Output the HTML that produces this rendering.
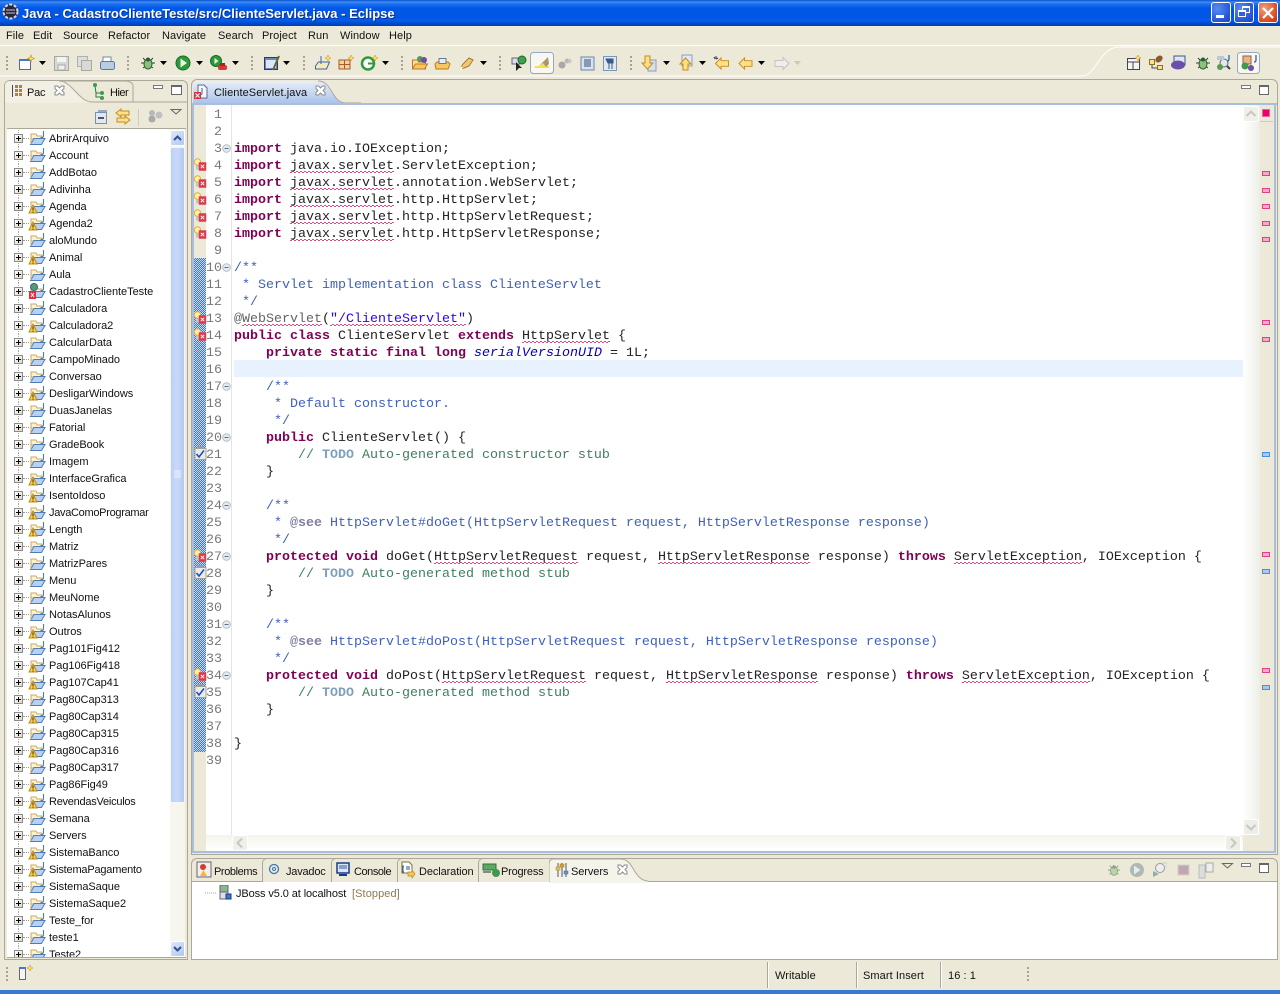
<!DOCTYPE html>
<html><head><meta charset="utf-8"><title>Java - Eclipse</title>
<style>
*{box-sizing:border-box}
html,body{margin:0;padding:0}
body{width:1280px;height:994px;overflow:hidden;position:relative;background:#ece9d8;font:11px "Liberation Sans",sans-serif;color:#111}
.a{position:absolute}
.t{position:absolute;white-space:nowrap;line-height:14px;letter-spacing:.08px;margin-top:1px}
.n{letter-spacing:-.2px}
#title{left:0;top:0;width:1280px;height:26px;background:linear-gradient(#0a4fd0 0,#3d8ef6 2px,#1d6fee 4px,#0058e6 8px,#0055e5 17px,#005fee 20px,#0048c8 24px,#0a3aa8 26px)}
#title span{position:absolute;left:22px;top:6px;color:#fff;font:bold 13px/16px "Liberation Sans",sans-serif;letter-spacing:0;white-space:nowrap;text-shadow:1px 1px #0a2f90}
.wb{position:absolute;top:2px;width:20px;height:21px;border:1px solid #fff;border-radius:3px;background:radial-gradient(circle at 30% 30%,#5a8cf0,#2456d8 70%,#1b46c0)}
.wb.c{background:radial-gradient(circle at 30% 30%,#f0a080,#d84a20 70%,#b83a18)}
pre{margin:0;font:13.33px/17px "Liberation Mono",monospace;position:absolute;color:#222}
#code b{color:#7f0055}
.j{color:#3f5fbf}.c{color:#3f7f5f}.d{color:#7f9fbf;font-weight:bold}.s{color:#2a00ff}.f{color:#0000c0;font-style:italic}.g{color:#7f7f9f;font-weight:bold}
u{text-decoration:none;background:repeating-conic-gradient(#dc4a86 0 25%,transparent 0 50%) 0 calc(100% - 1px)/4px 2px repeat-x}
#tree{left:7px;top:129px;width:163px;height:828px;background:#fff;overflow:hidden;padding-top:1px}
.r{position:relative;height:17px;line-height:19px;padding-left:42px;white-space:nowrap;letter-spacing:-.05px;font-size:11px}
.r svg{position:absolute;left:21px;top:0;width:18px;height:17px}
.r i{position:absolute;left:7px;top:4px;width:9px;height:9px;border:1px solid #8a8a8a;background:linear-gradient(135deg,#fff,#dcd8c8)}
.r i:before{content:"";position:absolute;left:1px;top:3px;width:5px;height:1px;background:#000}
.r i:after{content:"";position:absolute;left:3px;top:1px;width:1px;height:5px;background:#000}
.r s{position:absolute;left:16px;top:8px;width:6px;border-top:1px dotted #999}
.r em{position:absolute;left:11px;top:0;height:17px;border-left:1px dotted #aaa}
.tab{position:absolute;top:858px;height:24px;border-left:1px solid #aca899;border-top:1px solid #aca899;border-radius:5px 0 0 0;background:#ece9d8}
.pk{position:absolute;left:1262px;width:8px;height:5px;background:#f8a8c8;border:1px solid #e0408a}
.bl{position:absolute;left:1262px;width:8px;height:5px;background:#a8c8f0;border:1px solid #4a90d8}
.sep{position:absolute;top:962px;height:26px;width:2px;background:#aca899;border-right:1px solid #fff}
</style></head>
<body>
<svg width="0" height="0" style="position:absolute">
<defs>
<symbol id="f" viewBox="0 0 18 17">
<path d="M3 4h5l1 2h5v3H3z" fill="#fdf3d2" stroke="#c8a860"/>
<path d="M2.500 14.500L6 8.500h11l-3.500 6z" fill="#b8d0f4" stroke="#4c7cb8"/>
<path d="M3 5v9" stroke="#c8a860"/>
<path d="M15.500 1v5q0 2-3 1.500" fill="none" stroke="#4c7cb8" stroke-width="1.100"/>
</symbol>
<symbol id="w" viewBox="0 0 18 17">
<path d="M5 7l4 8H1z" fill="#fbcf3e" stroke="#c08a20"/>
<path d="M5 9.500v3M5 13.500v1" stroke="#402800"/>
</symbol>
<symbol id="e" viewBox="0 0 13 15">
<circle cx="3.500" cy="4" r="3.200" fill="#fff0a8" stroke="#e0b040"/>
<path d="M2 7.500h3v4H2z" fill="#c4c4c0"/>
<rect x="5" y="4.500" width="7" height="8" fill="#e03848" stroke="#c84858" stroke-width=".5"/>
<path d="M6.800 6.800l3.400 3.400M10.200 6.800l-3.400 3.400" stroke="#fff"/>
</symbol>
<symbol id="k" viewBox="0 0 13 15">
<path d="M3.500 0h6v3h-6z" fill="#99a"/>
<rect x="1" y="2.500" width="11" height="11" fill="#eeece2" stroke="#a0a098"/>
<path d="M2.500 8l2.500 3 5-6.500" fill="none" stroke="#1850c8" stroke-width="1.600"/>
</symbol>
<symbol id="m" viewBox="0 0 9 9">
<circle cx="4.500" cy="4.500" r="3.800" fill="#e6eaf0" stroke="#b0bcc8"/>
<path d="M2.500 4.500h4" stroke="#5a7090"/>
</symbol>
<symbol id="da" viewBox="0 0 7 4"><path d="M0 0h7L3.500 4z" fill="#000"/></symbol>
<symbol id="ha" viewBox="0 0 2 16"><path d="M0 1h2v2H0zM0 5h2v2H0zM0 9h2v2H0zM0 13h2v2H0z" fill="#a8a490"/></symbol>
<symbol id="bug" viewBox="0 0 16 16"><path d="M3 3l3 3M13 3l-3 3M1 8h3M15 8h-3M3 13l3-2M13 13l-3-2" stroke="#1f4a30" fill="none"/><ellipse cx="8" cy="9" rx="4" ry="5" fill="#8fbf7a" stroke="#2a5a3a"/><circle cx="8" cy="4.500" r="2" fill="#2a5a3a"/></symbol>
<symbol id="ar" viewBox="0 0 16 14"><path d="M1 7l6-6v3h8v6H7v3z" fill="#fce08a" stroke="#c88a18"/></symbol>
<symbol id="X" viewBox="0 0 11 11"><path d="M1 1h2.500l2 2 2-2H10v2.500l-2 2 2 2V10H7.500l-2-2-2 2H1V7.500l2-2-2-2z" fill="#fff" stroke="#8c8c8c"/></symbol>
</defs>
</svg>

<!-- title bar -->
<div id="title" class="a"><span>Java - CadastroClienteTeste/src/ClienteServlet.java - Eclipse</span></div>
<svg class="a" style="left:2px;top:3px" width="17" height="17"><circle cx="8.500" cy="8.500" r="7" fill="#26263c" stroke="#e0d8d0" stroke-width="2" stroke-dasharray="3 1.500"/><path d="M4 7h9M4 10h9" stroke="#c8c0d8"/></svg>
<div class="wb" style="left:1211px"><div class="a" style="left:4px;top:12px;width:8px;height:3px;background:#fff"></div></div>
<div class="wb" style="left:1234px"><div class="a" style="left:7px;top:3px;width:8px;height:7px;border:1px solid #fff;border-top-width:2px"></div><div class="a" style="left:3px;top:7px;width:8px;height:7px;border:1px solid #fff;border-top-width:2px;background:#2f60dc"></div></div>
<div class="wb c" style="left:1258px"><svg class="a" style="left:3px;top:4px" width="12" height="12"><path d="M1 1l10 10M11 1L1 11" stroke="#fff" stroke-width="2.200"/></svg></div>

<!-- menu -->
<div class="t" style="left:6px;top:28px">File</div>
<div class="t" style="left:33px;top:28px">Edit</div>
<div class="t" style="left:63px;top:28px">Source</div>
<div class="t" style="left:108px;top:28px">Refactor</div>
<div class="t" style="left:162px;top:28px">Navigate</div>
<div class="t" style="left:218px;top:28px">Search</div>
<div class="t" style="left:262px;top:28px">Project</div>
<div class="t" style="left:308px;top:28px">Run</div>
<div class="t" style="left:340px;top:28px">Window</div>
<div class="t" style="left:389px;top:28px">Help</div>
<div class="a" style="left:0;top:45px;width:1280px;height:1px;background:#fff"></div>

<!-- toolbar -->
<svg class="a" style="left:0;top:46px" width="1280" height="34">
<g id="tb" transform="translate(0,-46)">
<use href="#ha" x="6" y="55" width="2" height="16"/><use href="#ha" x="127" y="55" width="2" height="16"/><use href="#ha" x="251" y="55" width="2" height="16"/><use href="#ha" x="303" y="55" width="2" height="16"/><use href="#ha" x="401" y="55" width="2" height="16"/><use href="#ha" x="499" y="55" width="2" height="16"/><use href="#ha" x="630" y="55" width="2" height="16"/>
<!-- new -->
<rect x="19.500" y="59.500" width="11" height="10" fill="#fff" stroke="#5a6a80"/><rect x="19" y="59" width="12" height="2" fill="#4a78c0"/><path d="M31 55l1 2.500 2.500 1-2.500 1-1 2.500-1-2.500-2.500-1 2.500-1z" fill="#fce068" stroke="#c09020" stroke-width=".6"/>
<use href="#da" x="39" y="61" width="7" height="4"/>
<!-- save -->
<rect x="54.500" y="56.500" width="14" height="14" fill="#d8d8d4" stroke="#a8a8a4"/><rect x="57" y="57" width="9" height="5" fill="#f4f4f0"/><rect x="58" y="65" width="7" height="5" fill="#f0f0ea" stroke="#aaa"/>
<rect x="77.500" y="56.500" width="10" height="10" fill="#ddd" stroke="#b0b0ac"/><rect x="81.500" y="60.500" width="10" height="10" fill="#d8d8d4" stroke="#a8a8a4"/>
<path d="M103 57h8v5h-8z" fill="#fff" stroke="#7088a8"/><rect x="100.500" y="61.500" width="14" height="8" rx="2" fill="#b8cce4" stroke="#5878a8"/>
<!-- debug run -->
<use href="#bug" x="140" y="55" width="16" height="16"/><use href="#da" x="160" y="61" width="7" height="4"/>
<circle cx="183" cy="63" r="7" fill="#2f9a3a" stroke="#1a6a28"/><path d="M180.500 58.500v9l6.500-4.500z" fill="#e8f8e0"/><use href="#da" x="196" y="61" width="7" height="4"/>
<circle cx="216" cy="61" r="5.500" fill="#2f9a3a" stroke="#1a6a28"/><path d="M214.500 58v6l4-3z" fill="#e8f8e0"/><rect x="218" y="65" width="9" height="5" rx="2" fill="#d83838"/><rect x="220" y="63" width="5" height="3" fill="#b02020"/><use href="#da" x="232" y="61" width="7" height="4"/>
<!-- task -->
<rect x="264.500" y="57.500" width="13" height="12" fill="#6a88b8" stroke="#283a68"/><rect x="266" y="60" width="10" height="8" fill="#dde6f2"/><path d="M279 56l-6 14" stroke="#606a30" stroke-width="2"/><use href="#da" x="283" y="61" width="7" height="4"/>
<!-- new pkg etc -->
<path d="M315.500 66l3-4h11l-3 7h-11z" fill="#f8eab8" stroke="#3a66a8"/><path d="M321 56v8" stroke="#3a66a8"/><path d="M328 55l1 2 2 1-2 1-1 2-1-2-2-1 2-1z" fill="#fce068" stroke="#c09020" stroke-width=".5"/>
<path d="M339 60h11v9h-11z" fill="#f0d4a0" stroke="#a85a28"/><path d="M344.500 60v9M339 64.500h11" stroke="#a85a28"/><path d="M351 55l1 2 2 1-2 1-1 2-1-2-2-1 2-1z" fill="#fce068" stroke="#c09020" stroke-width=".5"/>
<circle cx="368" cy="63.500" r="6" fill="#fff" stroke="#2f9a3a" stroke-width="2.500"/><path d="M368 63.500h5" stroke="#2f9a3a" stroke-width="2"/><path d="M375 55l1 2 2 1-2 1-1 2-1-2-2-1 2-1z" fill="#fce068" stroke="#c09020" stroke-width=".5"/><use href="#da" x="382" y="61" width="7" height="4"/>
<!-- open -->
<path d="M412.500 69v-9h5l1 2h7v7z" fill="#fbe0a0" stroke="#c07820"/><path d="M412.500 69l3-5h12l-3 5z" fill="#f8c860" stroke="#c07820"/><circle cx="420" cy="59" r="3" fill="#5a9a50"/><circle cx="424" cy="60" r="3" fill="#6a50a0"/>
<path d="M436 69l-1-5 2-2h11l2 2-2 5z" fill="#f8c860" stroke="#c07820"/><rect x="439" y="58.500" width="7" height="5" fill="#e8ecf0" stroke="#6a7a90"/>
<path d="M460 69l3-5 6-6 4 2-4 6-5 2z" fill="#f0c878" stroke="#a87828"/><path d="M460 70l2-3" stroke="#fff" stroke-width="2"/><use href="#da" x="480" y="61" width="7" height="4"/>
<!-- toggles -->
<path d="M512 58h8v6h-8z" fill="#dde" stroke="#667"/><path d="M516 62v9l3-3h3z" fill="#222"/><circle cx="522" cy="60" r="4" fill="#3fa050" stroke="#1a6a28"/>
<rect x="530.500" y="52.500" width="23" height="21" rx="3" fill="#f8f7f0" stroke="#96a8c8"/><path d="M535 67h14" stroke="#f4e048" stroke-width="2"/><path d="M539 66l9-9 1 7-3 3h-7z" fill="#a89870"/><path d="M539 66l4-3 3 4h-7z" fill="#f0e060"/>
<circle cx="562" cy="65" r="3.500" fill="#a8a8a8"/><circle cx="567" cy="61" r="2.500" fill="#b8b8b8"/><path d="M570 58l1 2 1 1-1 1-1 2-1-2-1-1 1-1z" fill="#c8c8c0"/>
<rect x="581" y="57" width="13" height="13" fill="#d8e2f0" stroke="#6a88b0"/><path d="M584 60h7M584 62h7M584 64h7M584 66h7" stroke="#34507c"/>
<rect x="603.500" y="56.500" width="13" height="14" fill="#e0e8f2" stroke="#7a98b8"/><path d="M609 59v10M612 59v10M606 59h7v4h-5z" stroke="#3a5a88" fill="#3a5a88"/>
<!-- nav -->
<rect x="648" y="60" width="8" height="11" fill="#d8e0ee" stroke="#8aa0c0"/><path d="M645 56h5v7h3l-5.500 6-5.500-6h3z" fill="#fce08a" stroke="#c88a18"/><use href="#da" x="663" y="61" width="7" height="4"/>
<rect x="682" y="55" width="10" height="11" fill="#e0e8f2" stroke="#8aa0c0"/><path d="M683 70h5v-6h3l-5.500-6-5.500 6h3z" fill="#fce08a" stroke="#c88a18"/><use href="#da" x="699" y="61" width="7" height="4"/>
<use href="#ar" x="714" y="57" width="16" height="13"/><path d="M714 57l1 2M716 56v3M718 58l-2 1" stroke="#334" fill="none"/><use href="#ar" x="738" y="57" width="15" height="13"/><use href="#da" x="758" y="61" width="7" height="4"/>
<g transform="translate(789,57) scale(-1,1)"><path d="M0 6.500l6-6v3h8v6H6v3z" fill="#eee" stroke="#c4c4bc"/></g><path d="M794 61h7l-3.500 4z" fill="#c8c8bc"/>
<!-- perspective bar -->
<path d="M0 76H1083C1095 76 1100 48 1118 47H1280" fill="none" stroke="#fff"/>
<rect x="1127.500" y="58.500" width="12" height="11" fill="#f4f4f0" stroke="#445"/><path d="M1127 62h12M1133 62v8" stroke="#445"/><path d="M1138 55l1 2 2 1-2 1-1 2-1-2-2-1 2-1z" fill="#fce068" stroke="#c09020" stroke-width=".5"/>
<rect x="1149.500" y="59.500" width="5" height="5" fill="#fce08a" stroke="#907020"/><rect x="1157.500" y="65.500" width="5" height="4" fill="#fce08a" stroke="#907020"/><path d="M1152 65v3h5" stroke="#445" fill="none"/><ellipse cx="1159" cy="59" rx="4" ry="3" fill="#8a5a30" transform="rotate(-40 1159 59)"/>
<rect x="1174" y="56" width="11" height="9" fill="#dde6f2" stroke="#3a5a88"/><ellipse cx="1178" cy="65" rx="7" ry="4.500" fill="#6a50a8"/>
<use href="#bug" x="1195" y="55" width="16" height="16"/>
<circle cx="1224" cy="63" r="4" fill="#dfe8f0" stroke="#667"/><circle cx="1220" cy="67" r="3" fill="#5a9a50"/><path d="M1227 66l3 3" stroke="#444" stroke-width="2"/><path d="M1229 55v4q0 2-2 2" stroke="#30619f" fill="none" stroke-width="1.300"/><rect x="1217" y="56" width="7" height="4" fill="#b8c8d8"/>
<rect x="1237.500" y="52.500" width="22" height="21" rx="3" fill="#f8f7f0" stroke="#96a8c8"/><rect x="1243" y="56" width="8" height="8" fill="#e0b890" stroke="#a85a28"/><circle cx="1245" cy="66" r="3.500" fill="#3f9a50"/><circle cx="1251" cy="68" r="3" fill="#6a50a8"/><path d="M1256 55v5q0 2-2 2" stroke="#30619f" fill="none" stroke-width="1.300"/>
</g>
</svg>

<!-- left panel -->
<div class="a" style="left:4px;top:80px;width:184px;height:880px;border:1px solid #aca899;border-radius:6px 6px 0 0;background:#ece9d8"></div>
<svg class="a" style="left:4px;top:80px" width="184" height="50">
<path d="M1 23V6Q1 1 6 1H55C68 1 75 22 88 22H183" fill="#f2f0e4" stroke="none"/>
<path d="M55 1C68 1 75 22 88 22H183" fill="none" stroke="#aca899"/>
<path d="M129 22V6Q129 2 122 1H60" fill="none" stroke="#aca899"/>
<rect x="8" y="5" width="1" height="12" fill="#446"/><rect x="11" y="5" width="3" height="3" fill="#a8804a"/><rect x="15" y="5" width="3" height="3" fill="#a8804a"/><rect x="11" y="9" width="3" height="3" fill="#a8804a"/><rect x="15" y="9" width="3" height="3" fill="#a8804a"/><rect x="11" y="13" width="3" height="3" fill="#a8804a"/><rect x="15" y="13" width="3" height="3" fill="#a8804a"/>
<use href="#X" x="50" y="5" width="11" height="11"/>
<path d="M91 6l1 7h5M92 12v5h5" stroke="#2a7a4a" fill="none"/><circle cx="91" cy="5" r="2" fill="#3f9a50"/><circle cx="98" cy="13" r="2" fill="#3f9a50"/><circle cx="98" cy="18" r="2" fill="#3f9a50"/>
<rect x="149.500" y="5.500" width="9" height="3" fill="#fff" stroke="#777"/>
<rect x="167.500" y="5.500" width="10" height="9" fill="#fff" stroke="#666"/><rect x="167" y="5" width="11" height="2" fill="#666"/>
<rect x="91.500" y="32.500" width="11" height="11" fill="#e0e8f2" stroke="#7a90b0"/><path d="M94 38h6" stroke="#223" stroke-width="1.500"/><rect x="94" y="30" width="9" height="2" fill="#9ab"/>
<path d="M112 33l5-4v2h8v4h-8v2z" fill="#fce08a" stroke="#c88a18"/>
<path d="M126 40l-5-4v2h-8v4h8v2z" fill="#fce08a" stroke="#c88a18"/>
<rect x="134" y="29" width="1" height="17" fill="#cfccbc"/>
<circle cx="148" cy="39" r="3.500" fill="#aaa"/><circle cx="155" cy="35" r="3.500" fill="#c0c0c0"/><circle cx="148" cy="33" r="3" fill="#b8b8b8"/>
<path d="M167 29.500h10L172 34z" fill="#ece9d8" stroke="#666"/>
</svg>
<div class="t n" style="left:27px;top:85px">Pac</div>
<div class="t n" style="left:110px;top:85px;letter-spacing:-.5px">Hier</div>

<div id="tree" class="a">
<div class="r"><em></em><i></i><s></s><svg><use href="#f"/></svg>AbrirArquivo</div>
<div class="r"><em></em><i></i><s></s><svg><use href="#f"/></svg>Account</div>
<div class="r"><em></em><i></i><s></s><svg><use href="#f"/></svg>AddBotao</div>
<div class="r"><em></em><i></i><s></s><svg><use href="#f"/></svg>Adivinha</div>
<div class="r"><em></em><i></i><s></s><svg><use href="#f"/><use href="#w"/></svg>Agenda</div>
<div class="r"><em></em><i></i><s></s><svg><use href="#f"/><use href="#w"/></svg>Agenda2</div>
<div class="r"><em></em><i></i><s></s><svg><use href="#f"/></svg>aloMundo</div>
<div class="r"><em></em><i></i><s></s><svg><use href="#f"/><use href="#w"/></svg>Animal</div>
<div class="r"><em></em><i></i><s></s><svg><use href="#f"/></svg>Aula</div>
<div class="r"><em></em><i></i><s></s><svg><use href="#f"/><circle cx="6" cy="4" r="3.500" fill="#5a9a70" stroke="#34608a"/><rect x="1" y="8" width="7" height="8" fill="#e03040"/><path d="M3 10l3 4M6 10l-3 4" stroke="#fff"/></svg>CadastroClienteTeste</div>
<div class="r"><em></em><i></i><s></s><svg><use href="#f"/></svg>Calculadora</div>
<div class="r"><em></em><i></i><s></s><svg><use href="#f"/><use href="#w"/></svg>Calculadora2</div>
<div class="r"><em></em><i></i><s></s><svg><use href="#f"/></svg>CalcularData</div>
<div class="r"><em></em><i></i><s></s><svg><use href="#f"/></svg>CampoMinado</div>
<div class="r"><em></em><i></i><s></s><svg><use href="#f"/></svg>Conversao</div>
<div class="r"><em></em><i></i><s></s><svg><use href="#f"/><use href="#w"/></svg>DesligarWindows</div>
<div class="r"><em></em><i></i><s></s><svg><use href="#f"/></svg>DuasJanelas</div>
<div class="r"><em></em><i></i><s></s><svg><use href="#f"/></svg>Fatorial</div>
<div class="r"><em></em><i></i><s></s><svg><use href="#f"/></svg>GradeBook</div>
<div class="r"><em></em><i></i><s></s><svg><use href="#f"/></svg>Imagem</div>
<div class="r"><em></em><i></i><s></s><svg><use href="#f"/><use href="#w"/></svg>InterfaceGrafica</div>
<div class="r"><em></em><i></i><s></s><svg><use href="#f"/><use href="#w"/></svg>IsentoIdoso</div>
<div class="r" style="letter-spacing:-.3px"><em></em><i></i><s></s><svg><use href="#f"/><use href="#w"/></svg>JavaComoProgramar</div>
<div class="r"><em></em><i></i><s></s><svg><use href="#f"/><use href="#w"/></svg>Length</div>
<div class="r"><em></em><i></i><s></s><svg><use href="#f"/></svg>Matriz</div>
<div class="r"><em></em><i></i><s></s><svg><use href="#f"/></svg>MatrizPares</div>
<div class="r"><em></em><i></i><s></s><svg><use href="#f"/></svg>Menu</div>
<div class="r"><em></em><i></i><s></s><svg><use href="#f"/></svg>MeuNome</div>
<div class="r"><em></em><i></i><s></s><svg><use href="#f"/></svg>NotasAlunos</div>
<div class="r"><em></em><i></i><s></s><svg><use href="#f"/><use href="#w"/></svg>Outros</div>
<div class="r"><em></em><i></i><s></s><svg><use href="#f"/></svg>Pag101Fig412</div>
<div class="r"><em></em><i></i><s></s><svg><use href="#f"/><use href="#w"/></svg>Pag106Fig418</div>
<div class="r"><em></em><i></i><s></s><svg><use href="#f"/><use href="#w"/></svg>Pag107Cap41</div>
<div class="r"><em></em><i></i><s></s><svg><use href="#f"/></svg>Pag80Cap313</div>
<div class="r"><em></em><i></i><s></s><svg><use href="#f"/><use href="#w"/></svg>Pag80Cap314</div>
<div class="r"><em></em><i></i><s></s><svg><use href="#f"/></svg>Pag80Cap315</div>
<div class="r"><em></em><i></i><s></s><svg><use href="#f"/><use href="#w"/></svg>Pag80Cap316</div>
<div class="r"><em></em><i></i><s></s><svg><use href="#f"/></svg>Pag80Cap317</div>
<div class="r"><em></em><i></i><s></s><svg><use href="#f"/><use href="#w"/></svg>Pag86Fig49</div>
<div class="r" style="letter-spacing:-.25px"><em></em><i></i><s></s><svg><use href="#f"/><use href="#w"/></svg>RevendasVeiculos</div>
<div class="r"><em></em><i></i><s></s><svg><use href="#f"/></svg>Semana</div>
<div class="r"><em></em><i></i><s></s><svg><use href="#f"/></svg>Servers</div>
<div class="r"><em></em><i></i><s></s><svg><use href="#f"/><use href="#w"/></svg>SistemaBanco</div>
<div class="r" style="letter-spacing:-.2px"><em></em><i></i><s></s><svg><use href="#f"/><use href="#w"/></svg>SistemaPagamento</div>
<div class="r"><em></em><i></i><s></s><svg><use href="#f"/></svg>SistemaSaque</div>
<div class="r"><em></em><i></i><s></s><svg><use href="#f"/></svg>SistemaSaque2</div>
<div class="r"><em></em><i></i><s></s><svg><use href="#f"/></svg>Teste_for</div>
<div class="r"><em></em><i></i><s></s><svg><use href="#f"/></svg>teste1</div>
<div class="r"><em></em><i></i><s></s><svg><use href="#f"/></svg>Teste2</div>
</div>
<div class="a" style="left:7px;top:128px;width:179px;height:1px;background:#aca899"></div>
<div class="a" style="left:7px;top:957px;width:179px;height:1px;background:#aca899"></div>
<!-- left scrollbar -->
<div class="a" style="left:170px;top:129px;width:15px;height:828px;background:#f6f5ee"></div>
<div class="a" style="left:170px;top:147px;width:15px;height:656px;background:linear-gradient(90deg,#bcd0f6,#c8d8fa 50%,#b4c8f0);border:1px solid #f4f6fc;border-radius:2px"></div>
<div class="a" style="left:170px;top:130px;width:15px;height:16px;background:linear-gradient(135deg,#dde8fc,#b0c6f2);border:1px solid #fff;border-radius:2px"></div>
<div class="a" style="left:170px;top:941px;width:15px;height:16px;background:linear-gradient(135deg,#dde8fc,#b0c6f2);border:1px solid #fff;border-radius:2px"></div>
<svg class="a" style="left:170px;top:129px" width="15" height="830"><path d="M4 11l3.500-3.500L11 11" fill="none" stroke="#34508c" stroke-width="2"/><path d="M4 818l3.500 3.500 3.500-3.500" fill="none" stroke="#34508c" stroke-width="2"/><path d="M4 342h7M4 344h7M4 346h7M4 348h7" stroke="#eef2fc"/></svg>

<!-- editor panel -->
<div class="a" style="left:191px;top:79px;width:1087px;height:776px;border:1px solid #aca899;border-radius:6px 6px 0 0;background:#ece9d8"></div>
<svg class="a" style="left:191px;top:79px" width="170" height="27">
<defs><linearGradient id="eg" x1="0" y1="0" x2="0" y2="1"><stop offset="0" stop-color="#e8eefa"/><stop offset="1" stop-color="#a8c2e8"/></linearGradient></defs>
<path d="M2 25V7Q2 2 7 2H127C142 2 140 24 155 24H170V25z" fill="url(#eg)"/>
<path d="M127 2C142 2 140 24 155 24H170" fill="none" stroke="#aca899"/>
</svg>
<div class="a" style="left:192px;top:103px;width:1085px;height:2px;background:#a8bedc"></div>
<svg class="a" style="left:194px;top:84px" width="16" height="16"><path d="M4 1h6l3 3v10H4z" fill="#f4f6fa" stroke="#5a6a90"/><path d="M8 4v5q0 2-2 1.500" stroke="#30619f" fill="none"/><rect x="0" y="8" width="7" height="7" fill="#e03040"/><path d="M1.500 9.500l4 4M5.500 9.500l-4 4" stroke="#fff"/></svg>
<div class="t" style="left:214px;top:85px">ClienteServlet.java</div>
<svg class="a" style="left:315px;top:85px" width="11" height="11"><use href="#X"/></svg>
<svg class="a" style="left:1240px;top:84px" width="30" height="12"><rect x="1.500" y="1.500" width="9" height="3" fill="#fff" stroke="#777"/><rect x="19.500" y="1.500" width="9" height="9" fill="#fff" stroke="#666"/><rect x="19" y="1" width="10" height="2" fill="#666"/></svg>

<!-- editor -->
<div class="a" style="left:192px;top:105px;width:2px;height:748px;background:#a8bedc"></div>
<div class="a" style="left:1274px;top:105px;width:2px;height:748px;background:#a8bedc"></div>
<div class="a" style="left:192px;top:851px;width:1084px;height:2px;background:#a8bedc"></div>
<div class="a" style="left:194px;top:105px;width:12px;height:746px;background:#ece9d8"></div>
<div class="a" style="left:194px;top:258px;width:12px;height:494px;background:repeating-conic-gradient(#3f74c8 0 25%,#c8daf4 0 50%) 0 0/2px 2px"></div>
<div class="a" style="left:206px;top:105px;width:1037px;height:730px;background:#fff"></div>
<div class="a" style="left:231px;top:105px;width:1px;height:730px;background:#e4e4e0"></div>
<div class="a" style="left:234px;top:360px;width:1009px;height:17px;background:#e8f2fe"></div>

<pre id="nums" style="left:206px;top:107px;width:16px;text-align:right;color:#787878">
1
2
3
4
5
6
7
8
9
10
11
12
13
14
15
16
17
18
19
20
21
22
23
24
25
26
27
28
29
30
31
32
33
34
35
36
37
38
39</pre>

<pre id="code" style="left:234px;top:107px">


<b>import</b> java.io.IOException;
<b>import</b> <u>javax.servlet</u>.ServletException;
<b>import</b> <u>javax.servlet</u>.annotation.WebServlet;
<b>import</b> <u>javax.servlet</u>.http.HttpServlet;
<b>import</b> <u>javax.servlet</u>.http.HttpServletRequest;
<b>import</b> <u>javax.servlet</u>.http.HttpServletResponse;

<span class="j">/**</span>
<span class="j"> * Servlet implementation class ClienteServlet</span>
<span class="j"> */</span>
<span style="color:#646464">@<u>WebServlet</u></span>(<u class="s">"/ClienteServlet"</u>)
<b>public</b> <b>class</b> ClienteServlet <b>extends</b> <u>HttpServlet</u> {
    <b>private</b> <b>static</b> <b>final</b> <b>long</b> <span class="f">serialVersionUID</span> = 1L;

<span class="j">    /**</span>
<span class="j">     * Default constructor.</span>
<span class="j">     */</span>
    <b>public</b> ClienteServlet() {
<span class="c">        // <span class="d">TODO</span> Auto-generated constructor stub</span>
    }

<span class="j">    /**</span>
<span class="j">     * <span class="g">@see</span> HttpServlet#doGet(HttpServletRequest request, HttpServletResponse response)</span>
<span class="j">     */</span>
    <b>protected</b> <b>void</b> doGet(<u>HttpServletRequest</u> request, <u>HttpServletResponse</u> response) <b>throws</b> <u>ServletException</u>, IOException {
<span class="c">        // <span class="d">TODO</span> Auto-generated method stub</span>
    }

<span class="j">    /**</span>
<span class="j">     * <span class="g">@see</span> HttpServlet#doPost(HttpServletRequest request, HttpServletResponse response)</span>
<span class="j">     */</span>
    <b>protected</b> <b>void</b> doPost(<u>HttpServletRequest</u> request, <u>HttpServletResponse</u> response) <b>throws</b> <u>ServletException</u>, IOException {
<span class="c">        // <span class="d">TODO</span> Auto-generated method stub</span>
    }

}
</pre>

<svg class="a" style="left:194px;top:105px" width="38" height="680">
<use href="#m" x="28" y="39" width="9" height="9"/><use href="#m" x="28" y="158" width="9" height="9"/><use href="#m" x="28" y="277" width="9" height="9"/><use href="#m" x="28" y="328" width="9" height="9"/><use href="#m" x="28" y="396" width="9" height="9"/><use href="#m" x="28" y="447" width="9" height="9"/><use href="#m" x="28" y="515" width="9" height="9"/><use href="#m" x="28" y="566" width="9" height="9"/>
<use href="#e" y="53" width="13" height="15"/><use href="#e" y="70" width="13" height="15"/><use href="#e" y="87" width="13" height="15"/><use href="#e" y="104" width="13" height="15"/><use href="#e" y="121" width="13" height="15"/><use href="#e" y="206" width="13" height="15"/><use href="#e" y="223" width="13" height="15"/><use href="#e" y="444" width="13" height="15"/><use href="#e" y="563" width="13" height="15"/>
<use href="#k" y="341" width="13" height="15"/><use href="#k" y="460" width="13" height="15"/><use href="#k" y="579" width="13" height="15"/>
</svg>

<!-- editor scrollbars -->
<div class="a" style="left:1243px;top:105px;width:17px;height:730px;background:linear-gradient(90deg,#fff,#eeeee8)"></div>
<div class="a" style="left:206px;top:835px;width:1037px;height:16px;background:linear-gradient(#f4f4ee,#fff)"></div>
<div class="a" style="left:194px;top:835px;width:12px;height:16px;background:#ece9d8"></div>
<div class="a" style="left:1243px;top:835px;width:17px;height:16px;background:#ece9d8"></div>
<div class="a" style="left:1260px;top:105px;width:14px;height:746px;background:#ece9d8"></div>
<div class="a" style="left:1260px;top:121px;width:13px;height:1px;background:#cfccbc"></div>
<svg class="a" style="left:1243px;top:105px" width="17" height="735">
<rect x=".5" y="1.500" width="15" height="15" rx="2" fill="#f0f0e8" stroke="#fff"/><path d="M3.500 11l4.500-4.500 4.500 4.500" fill="none" stroke="#c8c8c0" stroke-width="2"/>
<rect x=".5" y="714.500" width="15" height="15" rx="2" fill="#eeeee6" stroke="#fff"/><path d="M3.500 720l4.500 4.500 4.500-4.500" fill="none" stroke="#c8c8c0" stroke-width="2"/>
</svg>
<svg class="a" style="left:232px;top:835px" width="1010" height="17">
<rect x=".5" y=".5" width="15" height="15" rx="2" fill="#f0f0e8" stroke="#fff"/><path d="M10 3.500l-4.500 4.500 4.500 4.500" fill="none" stroke="#c8c8c0" stroke-width="2"/>
<rect x="993.500" y=".5" width="15" height="15" rx="2" fill="#eeeee6" stroke="#fff"/><path d="M999 3.500l4.500 4.500-4.500 4.500" fill="none" stroke="#c8c8c0" stroke-width="2"/>
</svg>
<div class="a" style="left:1262px;top:109px;width:8px;height:8px;background:#e8006c;border:1px solid #f060a0"></div>
<div class="pk" style="top:171px"></div><div class="pk" style="top:188px"></div><div class="pk" style="top:204px"></div><div class="pk" style="top:221px"></div><div class="pk" style="top:237px"></div><div class="pk" style="top:320px"></div><div class="pk" style="top:337px"></div><div class="pk" style="top:552px"></div><div class="pk" style="top:668px"></div>
<div class="bl" style="top:452px"></div><div class="bl" style="top:569px"></div><div class="bl" style="top:685px"></div>

<!-- bottom panel -->
<div class="a" style="left:191px;top:858px;width:1087px;height:102px;border:1px solid #aca899;border-radius:6px 6px 0 0;background:#ece9d8"></div>
<div class="a" style="left:192px;top:881px;width:1085px;height:1px;background:#aca899"></div>
<div class="a" style="left:192px;top:882px;width:1085px;height:77px;background:#fff"></div>
<div class="tab" style="left:262px;width:69px"></div>
<div class="tab" style="left:331px;width:66px"></div>
<div class="tab" style="left:397px;width:81px"></div>
<div class="tab" style="left:478px;width:71px"></div>
<svg class="a" style="left:549px;top:858px" width="100" height="25"><path d="M0 24V6Q0 1 5 1H72C85 1 84 22 99 23V25H0z" fill="#f5f4ea"/><path d="M0 24V6Q0 1 5 1H72C85 1 84 22 99 23" fill="none" stroke="#aca899"/></svg>
<svg class="a" style="left:190px;top:860px" width="440" height="22">
<rect x="7" y="2" width="14" height="15" fill="#f4f0e8" stroke="#667"/><circle cx="13" cy="7" r="3" fill="#d83838"/><path d="M10 16l3.500-6 3.500 6z" fill="#f4b838"/>
<circle cx="84" cy="9" r="4.500" fill="none" stroke="#3a78b8" stroke-width="1.300"/><circle cx="84" cy="9" r="1.500" fill="none" stroke="#3a78b8"/>
<rect x="147" y="3" width="12" height="10" fill="#d8e6f8" stroke="#1a3a88" stroke-width="1.500"/><path d="M149 6h8M149 8h8" stroke="#3a5aa0"/><path d="M149 15h8" stroke="#1a3a88" stroke-width="2"/>
<path d="M212 2h7l3 3v8h-10z" fill="#fff" stroke="#7a7040"/><path d="M214 6h-1v6h1M216 7h4M216 9h4" stroke="#2a5a98" fill="none"/><path d="M218 12h4v-2l3 4-3 4v-2h-4z" fill="#f8c850" stroke="#b88820" stroke-width=".7"/>
<rect x="293" y="4" width="13" height="6" fill="#5aaa60" stroke="#3a6a40"/><path d="M293 12h8" stroke="#888" stroke-width="2"/><circle cx="306" cy="13" r="4" fill="#3f9a50"/>
<path d="M368 3v14M372 3v14M376 3v14" stroke="#556"/><rect x="366" y="7" width="4" height="3" fill="#f0c850" stroke="#a07a20" stroke-width=".5"/><rect x="370" y="4" width="4" height="3" fill="#d8a040" stroke="#a07a20" stroke-width=".5"/><rect x="374" y="11" width="4" height="3" fill="#5a9ad0" stroke="#3a6a98" stroke-width=".5"/>
<use href="#X" x="427" y="4" width="11" height="11"/>
</svg>
<div class="t" style="left:214px;top:864px;letter-spacing:-.4px">Problems</div>
<div class="t n" style="left:286px;top:864px">Javadoc</div>
<div class="t" style="left:354px;top:864px;letter-spacing:-.45px">Console</div>
<div class="t n" style="left:419px;top:864px;letter-spacing:-.1px">Declaration</div>
<div class="t n" style="left:501px;top:864px">Progress</div>
<div class="t n" style="left:571px;top:864px;letter-spacing:-.08px">Servers</div>
<svg class="a" style="left:1100px;top:860px" width="172" height="22">
<use href="#bug" x="7" y="3" width="14" height="14" opacity=".5"/>
<circle cx="37" cy="10" r="7" fill="#b0b8b0"/><path d="M34 5.500v9l6.500-4.500z" fill="#dfeef4"/>
<path d="M53 17v-6l6 3z" fill="#9aa"/><circle cx="60" cy="8" r="4.500" fill="#eee" stroke="#999"/><path d="M62 3h5M63 6h4" stroke="#ccc"/>
<rect x="78" y="5" width="11" height="10" fill="#c0a8b0" stroke="#d8d0c8"/>
<rect x="99" y="5" width="6" height="13" fill="#ddd" stroke="#bbb"/><rect x="106" y="3" width="7" height="9" fill="#eee" stroke="#aaa"/>
<path d="M122.500 3.500h10l-5 4.500z" fill="#ece9d8" stroke="#666"/>
<rect x="141.500" y="3.500" width="9" height="3" fill="#fff" stroke="#777"/>
<rect x="159.500" y="3.500" width="9" height="9" fill="#fff" stroke="#666"/><rect x="159" y="3" width="10" height="2" fill="#666"/>
</svg>
<svg class="a" style="left:204px;top:885px" width="32" height="16"><path d="M1 8h11" stroke="#aaa" stroke-dasharray="1 1"/><rect x="16" y="0" width="8" height="7" fill="#8ab88a" stroke="#667"/><rect x="16" y="7" width="8" height="7" fill="#dde" stroke="#667"/><rect x="22" y="9" width="5" height="5" fill="#3a78c8" stroke="#1a3a78"/></svg>
<div class="t n" style="left:236px;top:886px;letter-spacing:-.1px">JBoss v5.0 at localhost</div>
<div class="t" style="left:352px;top:886px;color:#8a7a50">[Stopped]</div>

<!-- status bar -->
<svg class="a" style="left:6px;top:964px" width="32" height="20"><use href="#ha" x="0" y="2" width="2" height="16"/><rect x="13.500" y="3.500" width="6" height="12" fill="#f4f4f0" stroke="#667"/><rect x="13" y="3" width="7" height="2" fill="#4a78c0"/><path d="M24 1l1 2 2 1-2 1-1 2-1-2-2-1 2-1z" fill="#fce068" stroke="#c09020" stroke-width=".5"/></svg>
<div class="sep" style="left:767px"></div>
<div class="sep" style="left:856px"></div>
<div class="sep" style="left:940px"></div>
<div class="t" style="left:775px;top:968px">Writable</div>
<div class="t" style="left:863px;top:968px">Smart Insert</div>
<div class="t" style="left:948px;top:968px">16 : 1</div>
<svg class="a" style="left:1027px;top:966px" width="2" height="16"><use href="#ha" width="2" height="16"/></svg>
<div class="a" style="left:0;top:990px;width:1280px;height:4px;background:#3a78d8"></div>
</body></html>
